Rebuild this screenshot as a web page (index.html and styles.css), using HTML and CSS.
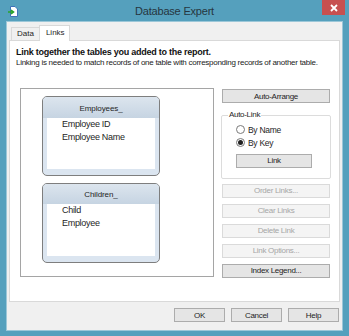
FILE: index.html
```html
<!DOCTYPE html>
<html lang="en">
<head>
    <meta charset="UTF-8">
    <title>Database Expert</title>
    <link rel="stylesheet" href="styles.css">
</head>
<body>
    <div class="window">
        <!-- Title bar -->
        <div class="titlebar">
            <svg class="app-icon" width="10" height="11" viewBox="0 0 10 11">
                <path d="M2.5 0.5 H7 L9.5 3 V10.5 H2.5 Z" fill="#fff" stroke="#3f73b8"/>
                <path d="M0 6 H4.5 M3 4 L5.5 6 L3 8" fill="none" stroke="#2aa32a" stroke-width="1.6"/>
            </svg>
            <div class="title">Database Expert</div>
            <div class="close">
                <svg width="8" height="8" viewBox="0 0 8 8">
                    <path d="M1 1 L7 7 M7 1 L1 7" stroke="#fff" stroke-width="1.8"/>
                </svg>
            </div>
        </div>

        <div class="client">
            <!-- Tabs -->
            <div class="tabs">
                <div class="tab">Data</div>
                <div class="tab active">Links</div>
            </div>

            <div class="panel">
                <p class="heading">Link together the tables you added to the report.</p>
                <p class="sub">Linking is needed to match records of one table with corresponding records of another table.</p>

                <div class="main">
                    <div class="link-area">
                        <div class="db-table">
                            <div class="db-head">Employees_</div>
                            <div class="db-list">
                                <div>Employee ID</div>
                                <div>Employee Name</div>
                            </div>
                        </div>
                        <div class="db-table">
                            <div class="db-head short">Children_</div>
                            <div class="db-list">
                                <div>Child</div>
                                <div>Employee</div>
                            </div>
                        </div>
                    </div>

                    <div class="side">
                        <button class="btn">Auto-Arrange</button>
                        <fieldset class="group">
                            <legend>Auto-Link</legend>
                            <div class="radio"><span class="dot"></span>By Name</div>
                            <div class="radio"><span class="dot checked"></span>By Key</div>
                            <button class="btn link-btn">Link</button>
                        </fieldset>
                        <button class="btn disabled first">Order Links...</button>
                        <button class="btn disabled">Clear Links</button>
                        <button class="btn disabled">Delete Link</button>
                        <button class="btn disabled">Link Options...</button>
                        <button class="btn">Index Legend...</button>
                    </div>
                </div>
            </div>

            <!-- Dialog buttons -->
            <div class="footer">
                <button class="btn dlg">OK</button>
                <button class="btn dlg">Cancel</button>
                <button class="btn dlg">Help</button>
            </div>
        </div>
    </div>
</body>
</html>
```

FILE: styles.css
```css
/* General */
body {
    margin: 0;
    padding: 0;
    font-family: "Liberation Sans", Arial, sans-serif;
    color: #1e1e1e;
}

.window {
    width: 349px;
    height: 336px;
    background: #55a0bd;
    display: flex;
    flex-direction: column;
}

/* Title bar */
.titlebar {
    height: 22px;
    display: grid;
    grid-template-columns: 1fr auto 1fr;
}

.app-icon {
    margin: 6px 0 0 8px;
}

.title {
    font-size: 11px;
    letter-spacing: -0.2px;
    line-height: 22px;
    color: #263640;
}

.close {
    justify-self: end;
    width: 23px;
    height: 15px;
    margin-right: 4px;
    background: #c75050;
    display: flex;
    align-items: center;
    justify-content: center;
}

/* Client area */
.client {
    height: 308px;
    margin: 0 7px;
    background: #f0f0f0;
    padding: 2px 0 0 2px;
    box-sizing: border-box;
    box-shadow: 0 0 0 1px #9cc7d8;
}

.tabs {
    display: flex;
    align-items: flex-end;
    height: 17px;
    padding-left: 2px;
    margin-bottom: -1px;
    position: relative;
    z-index: 1;
}

.tab {
    font-size: 8px;
    height: 12px;
    line-height: 12px;
    padding: 0 5px;
    background: #f0f0f0;
    border: 1px solid #d9d9d9;
    border-right: none;
}

.tab.active {
    height: 16px;
    line-height: 14px;
    width: 31px;
    box-sizing: border-box;
    padding: 0 0 0 6px;
    background: #fff;
    border: 1px solid #d9d9d9;
    border-bottom: none;
}

.panel {
    width: 331px;
    height: 262px;
    box-sizing: border-box;
    background: #fff;
    border: 1px solid #d9d9d9;
    padding: 6px 0 0 6px;
}

.heading {
    margin: 0;
    font-size: 9px;
    font-weight: bold;
    letter-spacing: -0.25px;
    line-height: 11px;
    color: #111;
}

.sub {
    margin: 0;
    font-size: 8px;
    letter-spacing: -0.27px;
    line-height: 10px;
    color: #222;
}

.main {
    display: flex;
    margin: 20px 0 0 4px;
}

/* Links canvas */
.link-area {
    width: 194px;
    height: 189px;
    box-sizing: border-box;
    border: 1px solid #a5a5a5;
    padding: 7px 0 0 21px;
    display: flex;
    flex-direction: column;
    gap: 7px;
}

.db-table {
    width: 118px;
    height: 80px;
    box-sizing: border-box;
    border: 1px solid #7e7e7e;
    border-radius: 5px;
    background: #dbe5f0;
    display: flex;
    flex-direction: column;
    overflow: hidden;
}

.db-head {
    height: 21px;
    box-sizing: border-box;
    padding-top: 7px;
    font-size: 8px;
    line-height: 10px;
    letter-spacing: -0.1px;
    text-align: center;
    background: linear-gradient(#dce5ee, #c6d4e2);
}

.db-head.short {
    height: 20px;
    padding-top: 6px;
}

.db-list {
    flex: 1;
    margin: 0 4px 6px;
    background: #fff;
    padding-left: 15px;
    font-size: 9px;
    letter-spacing: -0.3px;
    line-height: 13px;
}

/* Right side buttons */
.side {
    width: 108px;
    margin-left: 8px;
    padding-top: 1px;
    display: flex;
    flex-direction: column;
}

.btn {
    height: 14px;
    padding: 0;
    font-family: inherit;
    font-size: 8px;
    letter-spacing: -0.3px;
    color: #1e1e1e;
    background: #e5e5e5;
    border: 1px solid #acacac;
    margin-top: 6px;
}

.side > .btn:first-child {
    margin-top: 0;
}

.btn.disabled {
    color: #a6a6a6;
    background: #f4f4f4;
    border-color: #dadada;
}

.btn.first {
    margin-top: 5px;
}

.group {
    margin: 7px -1px 0;
    padding: 0 0 10px 6px;
    border: 1px solid #dcdcdc;
    border-radius: 2px;
}

.group legend {
    font-size: 8px;
    letter-spacing: -0.3px;
    line-height: 10px;
    padding: 0 1px;
}

.radio {
    display: flex;
    align-items: center;
    gap: 3px;
    height: 13px;
    padding-left: 8px;
    font-size: 8.5px;
    letter-spacing: -0.3px;
}

.radio:first-of-type {
    margin-top: 3px;
}

.dot {
    width: 9px;
    height: 9px;
    box-sizing: border-box;
    border: 1px solid #7a7a7a;
    border-radius: 50%;
    background: #fff;
    display: flex;
    align-items: center;
    justify-content: center;
}

.dot.checked::after {
    content: "";
    width: 5px;
    height: 5px;
    border-radius: 50%;
    background: #222;
}

.link-btn {
    width: 76px;
    margin: 4px 0 0 8px;
}

/* Dialog buttons */
.footer {
    display: flex;
    justify-content: flex-end;
    gap: 6px;
    padding-right: 3px;
    margin-top: 6px;
}

.btn.dlg {
    width: 51px;
    margin-top: 0;
}
```
